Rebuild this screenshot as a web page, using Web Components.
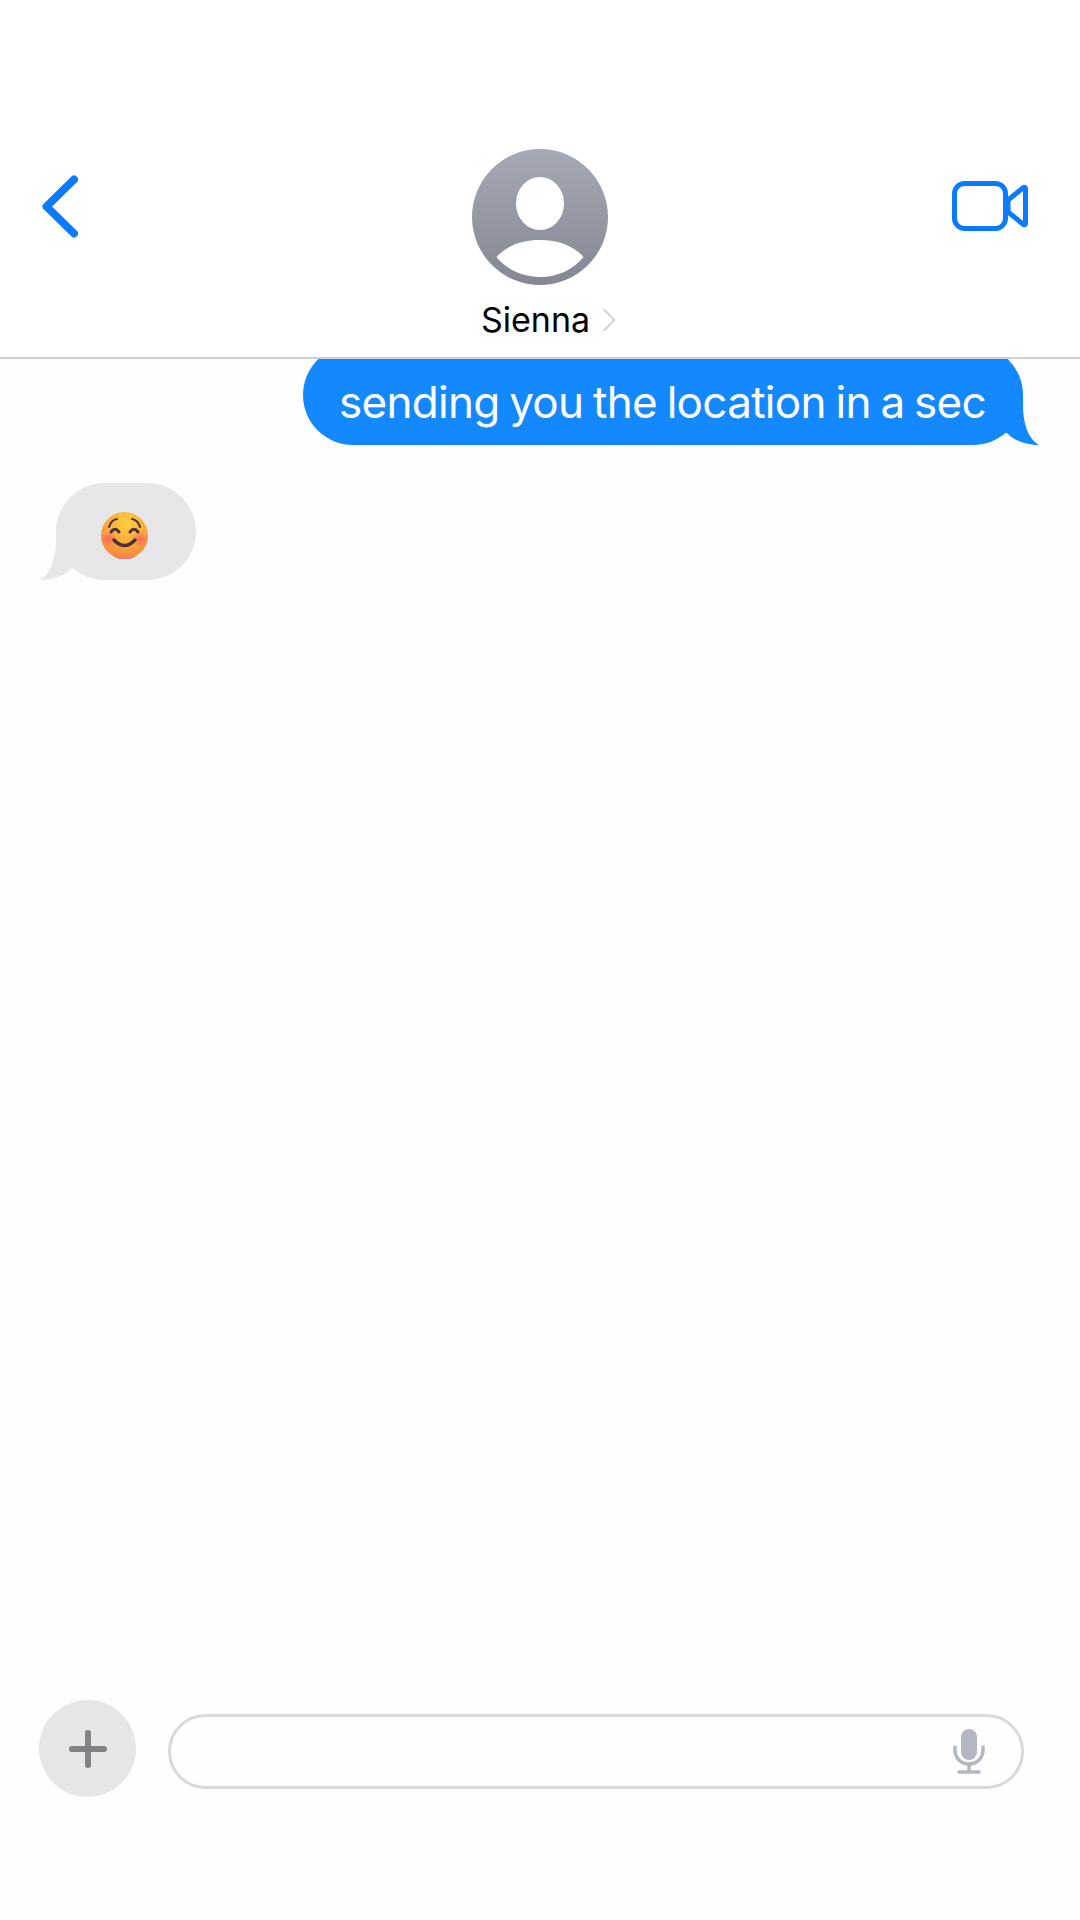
<!DOCTYPE html>
<html>
<head>
<meta charset="utf-8">
<title>Sienna</title>
<style>
  html, body { margin: 0; padding: 0; background: #fefefe; }
  body { font-family: Inter, "Liberation Sans", sans-serif; }
</style>
</head>
<body>
<chat-screen>
  <chat-header slot="header" name="Sienna"></chat-header>
  <chat-bubble from="me">sending you the location in a sec</chat-bubble>
  <chat-bubble from="them"><smile-emoji></smile-emoji></chat-bubble>
  <chat-composer slot="composer"></chat-composer>
</chat-screen>

<script>
class ChatScreen extends HTMLElement {
  constructor() {
    super();
    this.shadowDOM = this.attachShadow({mode: "open"});
    this.shadowDOM.innerHTML = `
      <style>
        :host { display: flex; flex-direction: column; width: 1080px; height: 1920px; overflow: hidden; }
        #thread {
          flex: 1;
          min-height: 0;
          overflow: hidden;
          display: flex;
          flex-direction: column;
          gap: 38px;
          padding: 0 57px 0 56px;
        }
      </style>
      <slot name="header"></slot>
      <div id="thread"><slot></slot></div>
      <slot name="composer"></slot>`;
  }
}

class ChatHeader extends HTMLElement {
  constructor() {
    super();
    this.shadowDOM = this.attachShadow({mode: "open"});
  }
  connectedCallback() {
    this.shadowDOM.innerHTML = `
      <style>
        :host {
          display: grid;
          grid-template-columns: 1fr auto 1fr;
          height: 358px;
          box-sizing: content-box;
          padding: 0;
          border-bottom: 2px solid #d0d0d2;
          margin-top: -1px;
          background: #fff;
        }
        #back { margin: 176px 0 0 42px; width: 36px; height: 63px; }
        #video { margin: 182px 52px 0 0; justify-self: end; width: 76px; height: 50px; }
        #contact { display: flex; flex-direction: column; align-items: center; padding-top: 150px; }
        #avatar { width: 136px; height: 136px; display: block; }
        #name { display: flex; align-items: center; gap: 13px; margin-top: 16px; padding-left: 17px; }
        #label { font-size: 34px; line-height: 38px; color: #000; letter-spacing: 0; }
        #more { width: 13px; height: 22px; }
        svg { display: block; }
      </style>
      <svg id="back" viewBox="0 0 36 63" fill="none" stroke="#0a7aff" stroke-width="8" stroke-linecap="round" stroke-linejoin="round">
        <path d="M32 4.500 L4.500 31.500 L32 58.500"/>
      </svg>
      <div id="contact">
        <svg id="avatar" viewBox="0 0 136 136">
          <defs>
            <linearGradient id="g" x1="0" y1="0" x2="0" y2="1">
              <stop offset="0" stop-color="#a6aab6"/>
              <stop offset="1" stop-color="#858892"/>
            </linearGradient>
          </defs>
          <circle cx="68" cy="68" r="68" fill="url(#g)"/>
          <ellipse cx="68" cy="54.500" rx="24" ry="26.500" fill="#fff"/>
          <path d="M24.500 108 C34 97 50 91 68 91 C86 91 102 97 111.500 108 C101 121 85 128 68 128 C51 128 35 121 24.500 108 Z" fill="#fff"/>
        </svg>
        <div id="name">
          <span id="label">${this.getAttribute("name")}</span>
          <svg id="more" viewBox="0 0 13 22" fill="none" stroke="#d2d2d4" stroke-width="2" stroke-linecap="round" stroke-linejoin="round"><path d="M1.500 1 L11.500 11 L1.500 21"/></svg>
        </div>
      </div>
      <svg id="video" viewBox="0 0 76 50" fill="none" stroke="#0a7aff" stroke-width="5" stroke-linejoin="round">
        <rect x="2.500" y="2.500" width="51" height="45" rx="10"/>
        <path d="M56 19 L71.500 6.500 Q73.500 5.500 73.500 8 L73.500 42 Q73.500 44.500 71.500 43.500 L56 31 Z"/>
      </svg>`;
  }
}

class ChatBubble extends HTMLElement {
  constructor() {
    super();
    this.shadowDOM = this.attachShadow({mode: "open"});
    this.shadowDOM.innerHTML = `
      <style>
        :host { display: block; position: relative; box-sizing: border-box; width: max-content; }
        :host([from="me"]) {
          align-self: flex-end;
          margin-top: -14px;
          height: 100px;
          padding: 31px 37px 0 36px;
          font-size: 44px;
          letter-spacing: -0.7px;
          word-spacing: -2px;
          line-height: 52px;
          color: #fff;
          background: #1488ff;
          border-radius: 50px;
          --tail: #1488ff;
        }
        :host([from="them"]) {
          align-self: flex-start;
          padding: 29px 48px 21px 45px;
          background: #e7e7e9;
          border-radius: 48.500px;
          --tail: #e7e7e9;
        }
        /* the tail hangs off the lower corner, so it sits over the bubble box */
        svg { position: absolute; bottom: 0; width: 50px; height: 50px; fill: var(--tail); }
        :host([from="me"]) svg { right: -16px; }
        :host([from="them"]) svg { left: -16px; transform: scaleX(-1); }
      </style>
      <slot></slot>
      <svg viewBox="0 0 50 50"><path d="M34 0 L34 10 C34 26 38 43 50 50 C40 50 26 47 18 38 L0 38 L0 0 Z"/></svg>`;
  }
}

class SmileEmoji extends HTMLElement {
  constructor() {
    super();
    this.shadowDOM = this.attachShadow({mode: "open"});
    this.shadowDOM.innerHTML = `
      <style>
        :host { display: block; width: 47px; height: 47px; }
        svg { display: block; }
      </style>
      <svg width="47" height="47" viewBox="0 0 47 47">
        <defs>
          <radialGradient id="face" cx="0.55" cy="0.25" r="0.8">
            <stop offset="0" stop-color="#ffd040"/>
            <stop offset="0.55" stop-color="#fca93a"/>
            <stop offset="1" stop-color="#f67f3c"/>
          </radialGradient>
          <radialGradient id="cheek">
            <stop offset="0" stop-color="#f2506f" stop-opacity="0.7"/>
            <stop offset="1" stop-color="#f2506f" stop-opacity="0"/>
          </radialGradient>
        </defs>
        <circle cx="23.500" cy="23.500" r="23.500" fill="url(#face)"/>
        <path d="M11 43.500 Q23.500 49.500 36 43.500 Q30 47.500 23.500 47.500 Q17 47.500 11 43.500 Z" fill="#ee5fa7"/>
        <ellipse cx="8" cy="27" rx="9" ry="8" fill="url(#cheek)"/>
        <ellipse cx="39" cy="27" rx="9" ry="8" fill="url(#cheek)"/>
        <g fill="none" stroke="#4a3140" stroke-linecap="round">
          <path d="M8 15 Q10 8 16 7" stroke-width="2"/>
          <path d="M39 15 Q37 8 31 7" stroke-width="2"/>
          <path d="M10 20 Q14 14.500 18 20" stroke-width="3"/>
          <path d="M29 20 Q33 14.500 37 20" stroke-width="3"/>
          <path d="M13 28 Q23.500 39 34 28" stroke-width="3.400"/>
        </g>
      </svg>`;
  }
}

class ChatComposer extends HTMLElement {
  constructor() {
    super();
    this.shadowDOM = this.attachShadow({mode: "open"});
    this.shadowDOM.innerHTML = `
      <style>
        :host { display: flex; gap: 32px; padding: 0 56px 123px 39px; }
        #add {
          width: 97px; height: 97px; border-radius: 50%; background: #e5e6e8;
          display: flex; align-items: center; justify-content: center; flex: none;
        }
        #field {
          flex: 1; height: 75px; box-sizing: border-box; margin-top: 14px;
          border: 3px solid #d9d9db; border-radius: 37.500px;
          display: flex; align-items: center; justify-content: flex-end; padding-right: 36px;
        }
        svg { display: block; }
      </style>
      <div id="add">
        <svg width="38" height="38" viewBox="0 0 38 38" stroke="#808285" stroke-width="6" stroke-linecap="round">
          <path d="M19 3 V35 M3 19 H35"/>
        </svg>
      </div>
      <div id="field">
        <svg width="32" height="45" viewBox="0 0 32 45" fill="none" stroke="#b3b7c1" stroke-width="3.500" stroke-linecap="round">
          <rect x="8" y="0" width="16" height="31" rx="8" fill="#b3b7c1" stroke="none"/>
          <path d="M2 18 V21 C2 29 8 35 16 35 C24 35 30 29 30 21 V18"/>
          <path d="M16 35 V43 M6 43 H26"/>
        </svg>
      </div>`;
  }
}

customElements.define("chat-screen", ChatScreen);
customElements.define("chat-header", ChatHeader);
customElements.define("chat-bubble", ChatBubble);
customElements.define("smile-emoji", SmileEmoji);
customElements.define("chat-composer", ChatComposer);
</script>
</body>
</html>
